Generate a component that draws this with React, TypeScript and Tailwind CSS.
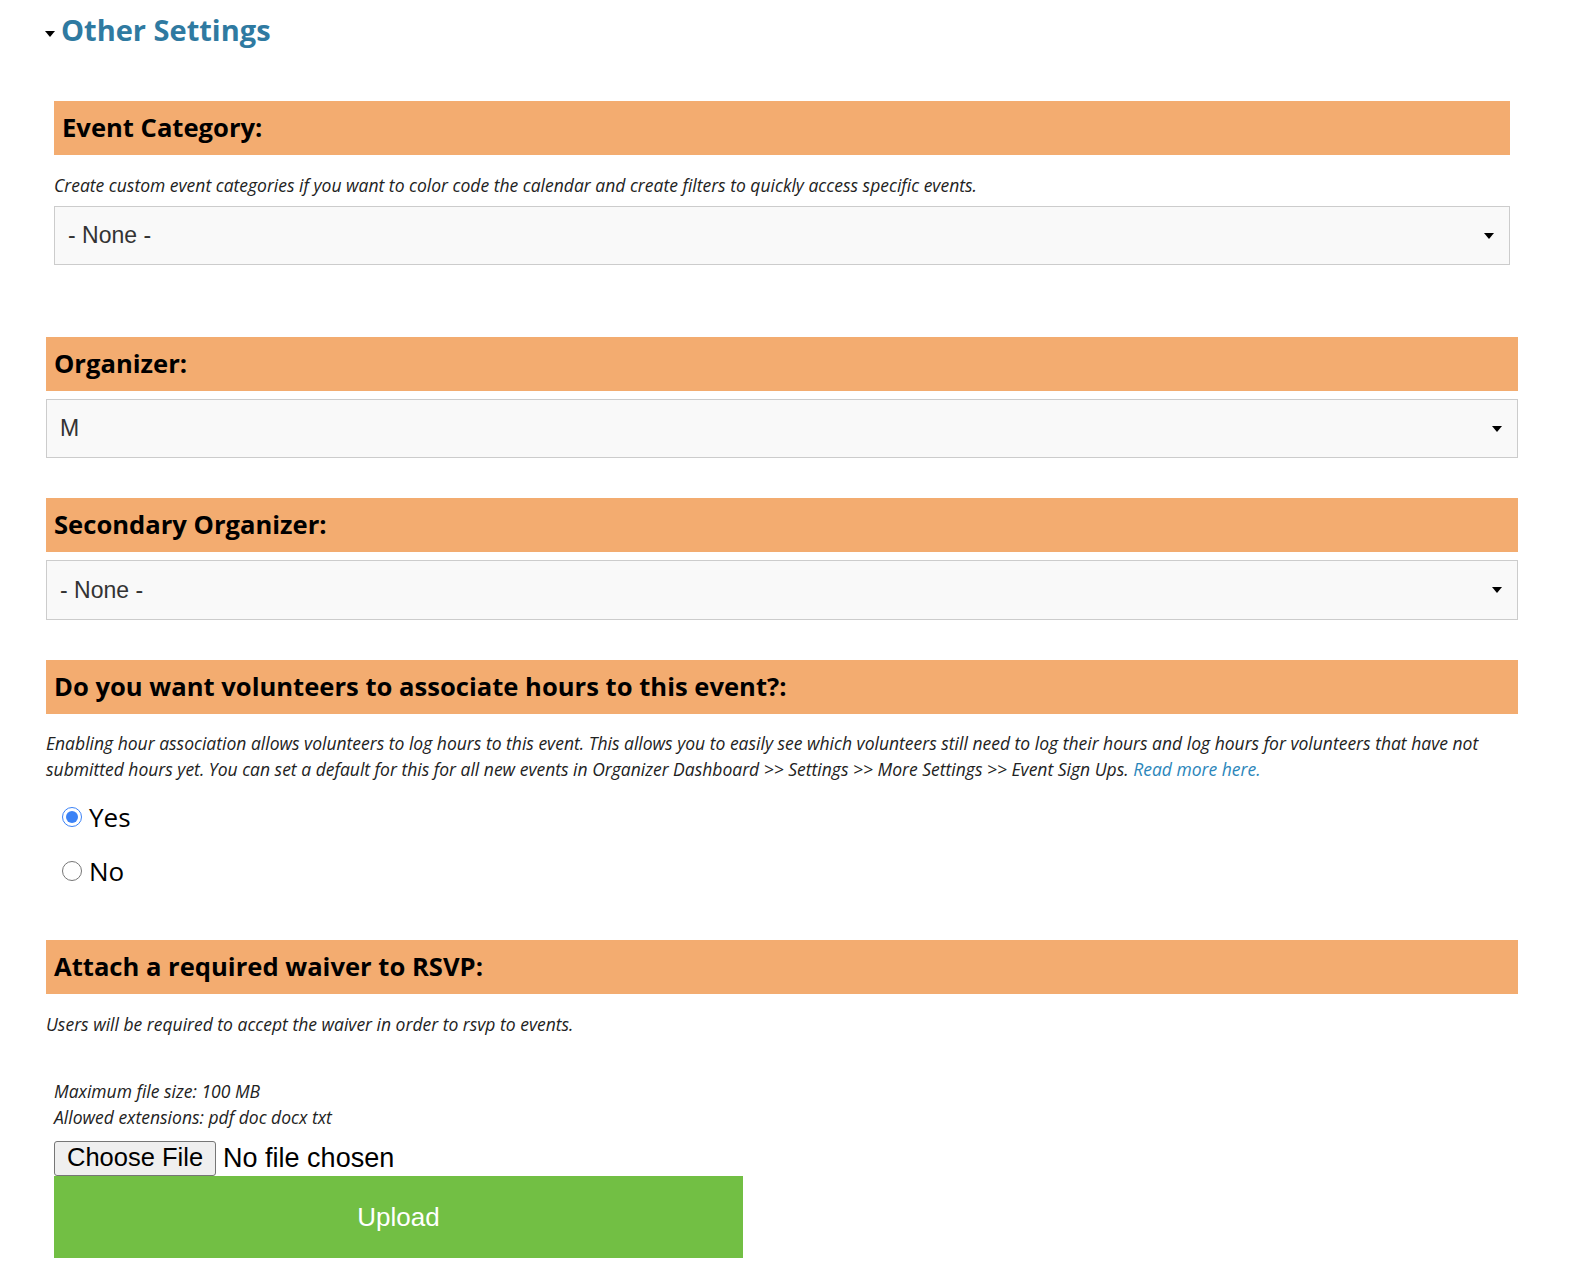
import { useState } from 'react';

const BAND = 'flex items-center h-[54px] bg-[#f3ac70] text-[25.6px] font-bold text-black';
const SELECT =
  'flex items-center justify-between h-[59px] bg-[#f9f9f9] border border-[#cccccc] text-[23px] text-[#333] [font-family:"Liberation_Sans",Arial,sans-serif]';
const NOTE = 'text-[17.5px] italic leading-[26px]';

function Caret() {
  return (
    <svg width="10" height="6" viewBox="0 0 10 6" className="shrink-0">
      <path d="M0 0 L10 0 L5 6 Z" fill="#000" />
    </svg>
  );
}

function FakeSelect({ value, className }: { value: string; className?: string }) {
  return (
    <div className={`${SELECT} ${className ?? ''}`}>
      <span>{value}</span>
      <Caret />
    </div>
  );
}

export default function App() {
  const [hours, setHours] = useState<'yes' | 'no'>('yes');

  return (
    <div className="min-h-screen bg-white pl-[46px] pr-[52px] pb-10 [font-family:'Open_Sans',sans-serif] text-[#222]">
      {/* Section title */}
      <div className="flex items-center pt-[11px] leading-[38px]">
        <svg width="10" height="6" viewBox="0 0 10 6" className="mr-[6px] mt-[8px] -ml-[1px]">
          <path d="M0 0 L10 0 L5 6 Z" fill="#000" />
        </svg>
        <h2 className="text-[29px] font-bold text-[#2f7aa1]">Other Settings</h2>
      </div>

      {/* Event category */}
      <div className="px-2 mt-[52px]">
        <div className={`${BAND} pl-2`}>Event Category:</div>
        <p className={`mt-[17px] ${NOTE}`}>
          Create custom event categories if you want to color code the calendar and create filters to quickly access specific events.
        </p>
        <FakeSelect value="- None -" className="mt-[8px] pl-[13px] pr-[15px] h-[58px]" />
      </div>

      {/* Organizer */}
      <div className={`${BAND} pl-2 mt-[72px]`}>Organizer:</div>
      <FakeSelect value="M" className="mt-[8px] pl-[13px] pr-[15px]" />

      {/* Secondary organizer */}
      <div className={`${BAND} pl-2 mt-[40px]`}>Secondary Organizer:</div>
      <FakeSelect value="- None -" className="mt-[8px] pl-[13px] pr-[15px] h-[60px]" />

      {/* Volunteer hours */}
      <div className={`${BAND} pl-2 mt-[40px]`}>Do you want volunteers to associate hours to this event?:</div>
      <p className={`mt-[16px] ${NOTE}`}>
        Enabling hour association allows volunteers to log hours to this event. This allows you to easily see which volunteers still need to log their hours and log hours for volunteers that have not submitted hours yet. You can set a default for this for all new events in Organizer Dashboard &gt;&gt; Settings &gt;&gt; More Settings &gt;&gt; Event Sign Ups.{' '}
        <a href="#" className="text-[#2b86ba]">Read more here.</a>
      </p>
      <div className="flex flex-col pl-[16px] mt-[8px]">
        {(['yes', 'no'] as const).map((v) => (
          <label key={v} className="flex items-center h-[54px] text-[26px] text-black cursor-pointer">
            <input
              type="radio"
              name="hours"
              checked={hours === v}
              onChange={() => setHours(v)}
              className="w-[20px] h-[20px] m-0 mr-[7px] accent-[#3b82f6]"
            />
            <span>{v === 'yes' ? 'Yes' : 'No'}</span>
          </label>
        ))}
      </div>

      {/* Waiver */}
      <div className={`${BAND} pl-2 mt-[42px]`}>Attach a required waiver to RSVP:</div>
      <p className={`mt-[17px] ${NOTE}`}>
        Users will be required to accept the waiver in order to rsvp to events.
      </p>
      <div className="px-2 mt-[41px]">
        <div className={NOTE}>
          <div>Maximum file size: 100 MB</div>
          <div>Allowed extensions: pdf doc docx txt</div>
        </div>
        <div className="flex items-center h-[36px] mt-[10px] [font-family:'Liberation_Sans',Arial,sans-serif] text-[25.5px] text-black">
          <button
            type="button"
            className="h-[35px] px-[12px] bg-[#efefef] border border-[#767676] rounded-[3px] leading-none"
          >
            Choose File
          </button>
          <span className="ml-[7px] text-[27px] leading-none">No file chosen</span>
        </div>
        <button
          type="button"
          className="w-[689px] h-[82px] bg-[#72bf44] text-white text-[26px] [font-family:'Liberation_Sans',Arial,sans-serif]"
        >
          Upload
        </button>
      </div>
    </div>
  );
}
